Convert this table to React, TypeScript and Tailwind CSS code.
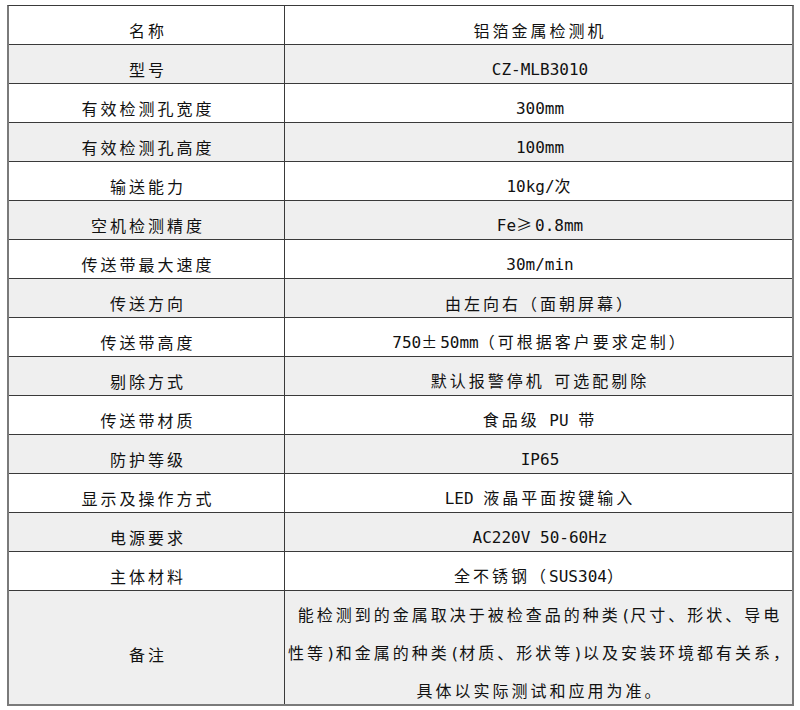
import React from "react";

const rows: [string, string][] = [
  ["名称", "铝箔金属检测机"],
  ["型号", "CZ-MLB3010"],
  ["有效检测孔宽度", "300mm"],
  ["有效检测孔高度", "100mm"],
  ["输送能力", "10kg/次"],
  ["空机检测精度", "Fe≥0.8mm"],
  ["传送带最大速度", "30m/min"],
  ["传送方向", "由左向右（面朝屏幕）"],
  ["传送带高度", "750±50mm（可根据客户要求定制）"],
  ["剔除方式", "默认报警停机 可选配剔除"],
  ["传送带材质", "食品级 PU 带"],
  ["防护等级", "IP65"],
  ["显示及操作方式", "LED 液晶平面按键输入"],
  ["电源要求", "AC220V 50-60Hz"],
  ["主体材料", "全不锈钢（SUS304）"],
];

const noteLines = [
  "能检测到的金属取决于被检查品的种类(尺寸、形状、导电",
  "性等)和金属的种类(材质、形状等)以及安装环境都有关系，",
  "具体以实际测试和应用为准。",
];

function Mixed({ text }: { text: string }) {
  const parts = text.match(/[\x20-\x7e]+|[^\x20-\x7e]+/g) || [];
  return (
    <span className="whitespace-pre">
      {parts.map((p, i) =>
        /^[\x20-\x7e]+$/.test(p) ? (
          <span
            key={i}
            className="tracking-normal [font-family:'DejaVu_Sans_Mono',monospace]"
          >
            {p}
          </span>
        ) : (
          <span
            key={i}
            className="tracking-[3px] [font-family:'Noto_Sans_CJK_SC',sans-serif]"
          >
            {p}
          </span>
        )
      )}
    </span>
  );
}

export default function App() {
  return (
    <div className="bg-white w-[800px] h-[710px] pt-[5px] pl-[7px] text-[16px] text-[#111] [font-family:'Noto_Sans_CJK_SC',sans-serif]">
      <div className="w-[787px] border-t border-t-[#3a3a3a] border-l-2 border-l-[#7a7a7a] border-r-2 border-r-[#7a7a7a] border-b-2 border-b-[#7a7a7a]">
        {rows.map(([k, v], i) => (
          <div
            key={k}
            className={`flex h-[39px] border-b border-[#3a3a3a] ${
              i % 2 === 1 ? "bg-[#efefef]" : "bg-white"
            }`}
          >
            <div className="w-[276px] border-r border-[#3a3a3a] flex items-center justify-center pt-[9px] pl-[3px]">
              <Mixed text={k} />
            </div>
            <div className="flex-1 flex items-center justify-center pt-[9px] pl-[3px]">
              <Mixed text={v} />
            </div>
          </div>
        ))}
        <div className="flex h-[113px] bg-[#efefef]">
          <div className="w-[276px] border-r border-[#3a3a3a] flex items-center justify-center pt-[13px] pl-[3px]">
            <Mixed text="备注" />
          </div>
          <div className="flex-1 flex flex-col items-center pt-[5px] pl-[3px] leading-[37px]">
            {noteLines.map((l) => (
              <div key={l}>
                <Mixed text={l} />
              </div>
            ))}
          </div>
        </div>
      </div>
    </div>
  );
}
